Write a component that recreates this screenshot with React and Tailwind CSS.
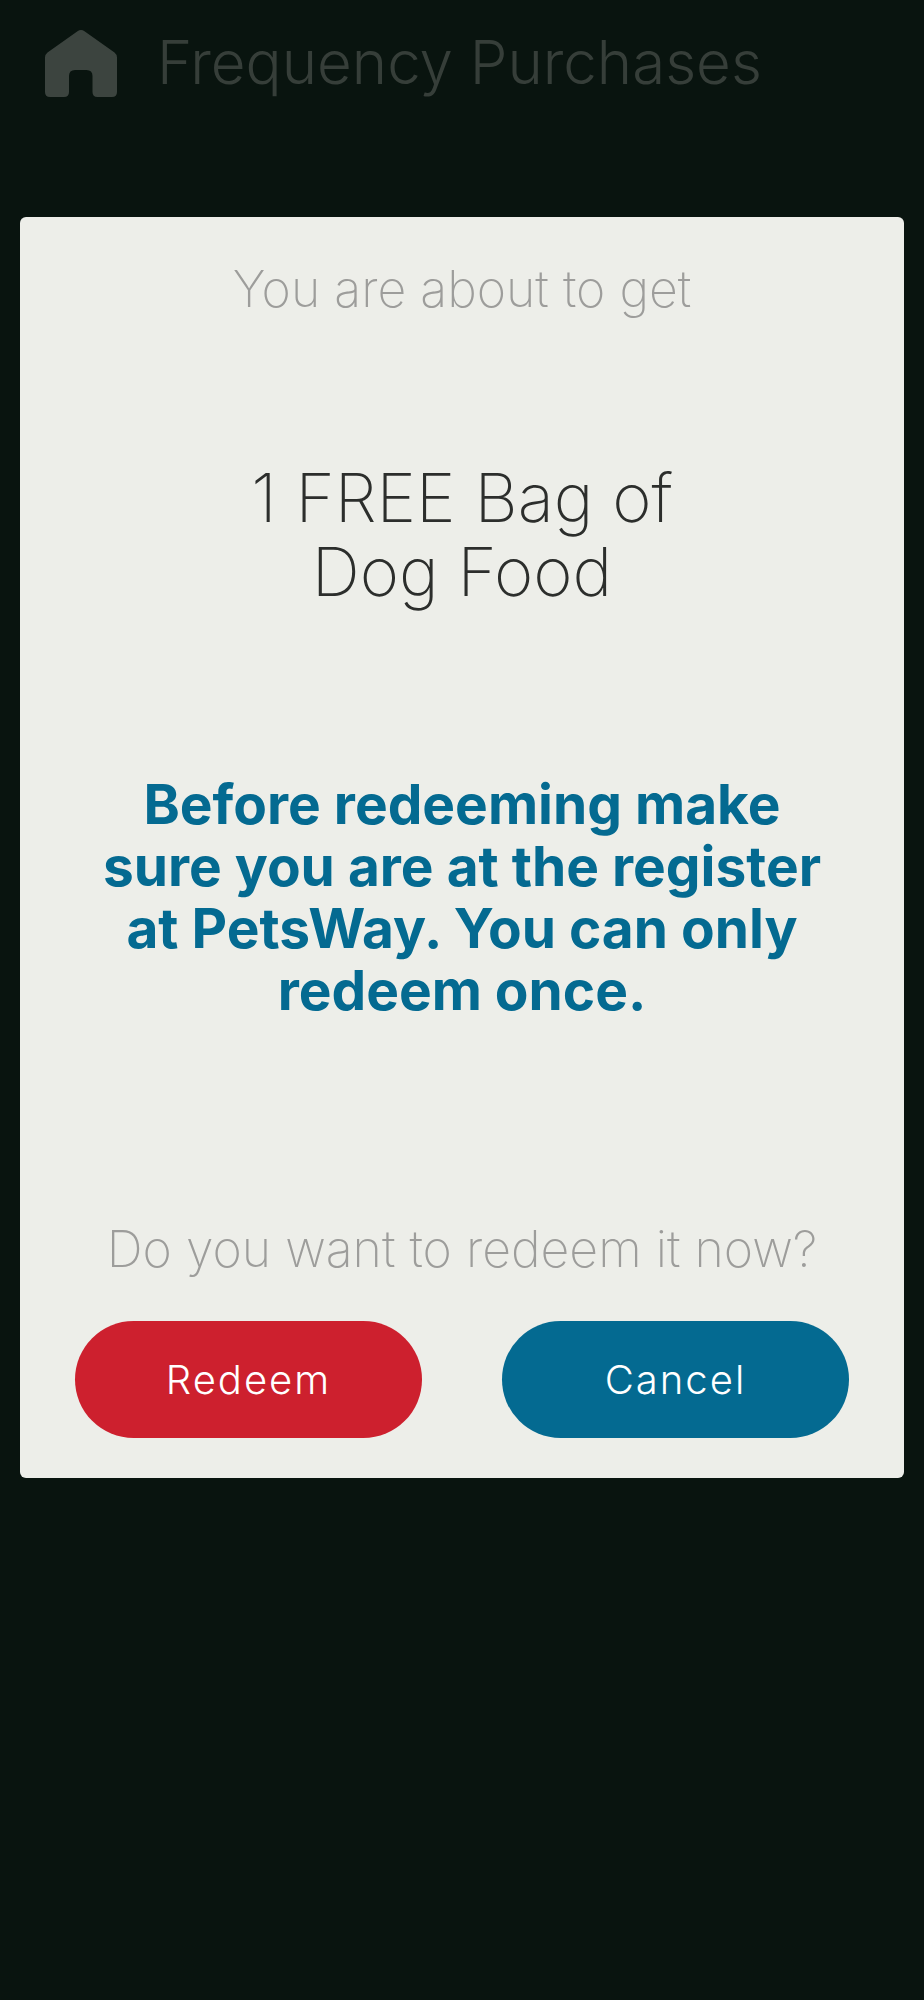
import React, { useState } from 'react';

const HomeIcon = () => (
  <svg viewBox="0 0 72 68" className="w-[72px] h-[68px]" fill="#3c443f" aria-hidden="true">
    <path d="M32.5 1.2 Q36 -1 39.5 1.2 L69.5 22.5 Q72 24.5 72 27.5 V62 Q72 67 67 67 H52.5 Q47.500 67 47.500 62 V46 Q47.500 40 41.500 40 H30 Q24 40 24 46 V62 Q24 67 19 67 H5 Q0 67 0 62 V27.500 Q0 24.500 2.500 22.500 Z" />
  </svg>
);

const RedeemDialog = ({ reward, store, onRedeem, onCancel }) => {
  const warning = `Before redeeming make sure you are at the register at ${store}. You can only redeem once.`;

  return (
    <div
      role="dialog"
      aria-label="Redeem reward"
      className="mx-5 mt-[119px] pt-11 pb-10 px-[55px] rounded-md bg-[#edeee9] text-center"
    >
      <p className="text-[50px] leading-[56px] font-extralight text-[#9d9d9b]">
        You are about to get
      </p>

      <h2 className="mt-[144px] mx-auto max-w-[500px] text-[67px] leading-[74px] font-extralight text-[#2c2e2c]">
        {reward}
      </h2>

      <p className="mt-[164px] px-4 text-[55px] leading-[62px] font-bold text-[#046a91]">
        {warning}
      </p>

      <p className="mt-[200px] text-[50px] leading-[56px] font-extralight text-[#9d9d9b]">
        Do you want to redeem it now?
      </p>

      {/* Actions */}
      <div className="mt-11 grid grid-cols-2 gap-20">
        <button
          onClick={onRedeem}
          className="h-[117px] rounded-full bg-[#cd202e] text-white text-[40px] tracking-wider font-light"
        >
          Redeem
        </button>
        <button
          onClick={onCancel}
          className="h-[117px] rounded-full bg-[#046a91] text-white text-[40px] tracking-wider font-light"
        >
          Cancel
        </button>
      </div>
    </div>
  );
};

const App = () => {
  const [open, setOpen] = useState(true);

  return (
    <div className="min-h-screen bg-[#09140f] font-['Inter','Liberation_Sans',sans-serif]">
      {/* Header */}
      <header className="flex items-center pt-[30px] px-[45px]">
        <a href="#home" aria-label="Home">
          <HomeIcon />
        </a>
        <h1 className="ml-10 pb-1 text-[60px] leading-[64px] font-light text-[#363e39]">
          Frequency Purchases
        </h1>
      </header>

      {open && (
        <RedeemDialog
          reward="1 FREE Bag of Dog Food"
          store="PetsWay"
          onRedeem={() => setOpen(false)}
          onCancel={() => setOpen(false)}
        />
      )}
    </div>
  );
};

export default App;
